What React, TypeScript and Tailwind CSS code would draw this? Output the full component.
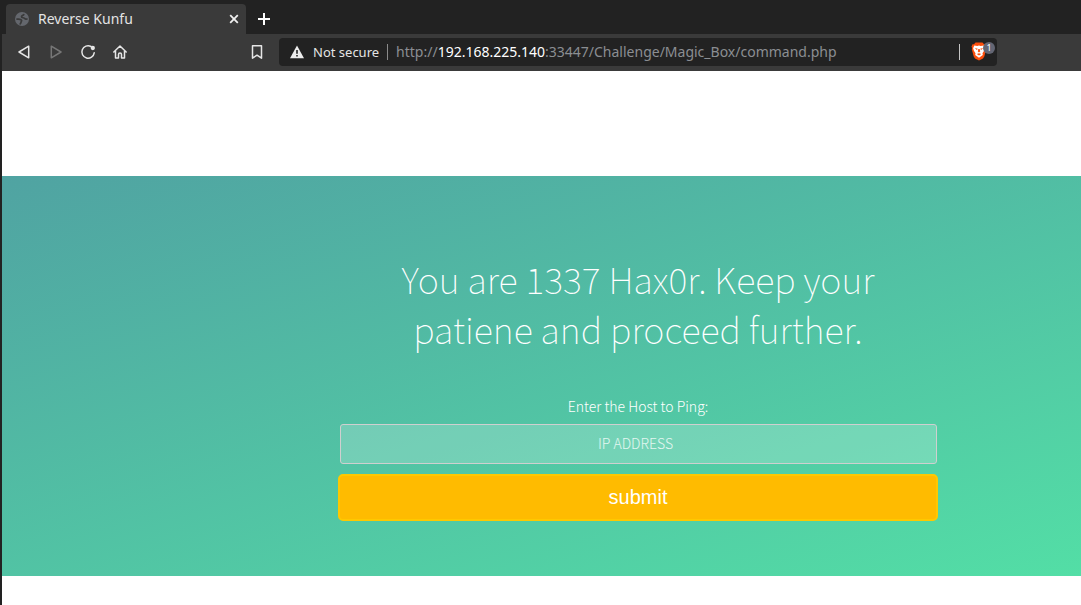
import React from "react";

const ui = "font-['Noto_Sans',sans-serif]";
const source = "font-['Noto_Sans_CJK_SC','Noto_Sans',sans-serif]";

function TabStrip() {
  return (
    <div className="flex h-[34px] items-end bg-[#222222] pl-1">
      <div className="flex h-[30px] w-60 items-center rounded-t bg-[#3a3a3a] pl-[9px] pr-[7px]">
        <svg viewBox="0 0 14 14" className="size-[14px] shrink-0" aria-hidden="true">
          <circle cx="7" cy="7" r="7" fill="#64676d" />
          <g fill="none" stroke="#3a3a3a" strokeWidth="1.700" strokeLinecap="round" strokeLinejoin="round">
            <path d="M8.800 2.600C8 3.400 6.500 3.300 6.500 4.800c0 1.300 2.600.6 3.300 1.700.4.700 1.200.7 2.200.500" />
            <path d="M2 7.200c1.400-.2 3.200 0 4.300.7 1 .7-.2 1.400-.2 2.200 0 .7-.300 1.300-.900 1.800" />
          </g>
        </svg>
        <span className="ml-[9px] grow whitespace-nowrap text-[14px] leading-5 text-[#e4e4e4]">Reverse Kunfu</span>
        <button type="button" aria-label="Close tab" className="flex size-[10px] items-center justify-center">
          <svg viewBox="0 0 10 10" className="size-[10px]" stroke="#f0f0f0" strokeWidth="1.800">
            <path d="M1.200 1.200l7.600 7.600M8.800 1.200L1.200 8.800" />
          </svg>
        </button>
      </div>
      <button type="button" aria-label="New tab" className="flex h-[30px] w-9 items-center justify-center">
        <svg viewBox="0 0 12 12" className="size-3" stroke="#ffffff" strokeWidth="2">
          <path d="M6 0v12M0 6h12" />
        </svg>
      </button>
    </div>
  );
}

function NavButton({ label, children }: { label: string; children: React.ReactNode }) {
  return (
    <button type="button" aria-label={label} className="flex size-8 items-center justify-center">
      <svg
        viewBox="0 0 16 16"
        className="size-4"
        fill="none"
        stroke="#e6e6e6"
        strokeWidth="1.500"
        strokeLinecap="round"
        strokeLinejoin="round"
      >
        {children}
      </svg>
    </button>
  );
}

function BraveShield() {
  return (
    <button type="button" aria-label="Brave Shields" className="relative h-5 w-[26px] shrink-0">
      <svg viewBox="0 0 16 19" className="h-[19px] w-4" aria-hidden="true">
        <path d="M4.500.5h7l1.500 1.700 1.500.1 1 2.200-.6 1.500.3 1.300-1.900 7.200-1.300 1.900L8 18.500l-4-2.100-1.300-1.900L.8 7.300l.3-1.300-.6-1.500 1-2.200L3 2.200z" fill="#fb4e0c" />
        <path d="M3.300 3.400l3 .6L8 3.400l1.700.6 3-.6 1.200 2.900-.8 2.500-1.600 2.500.3 1.600-1.700 1.400L8 15.800l-2.100-1.500-1.700-1.400.3-1.600-1.600-2.500-.8-2.500z" fill="#ffffff" />
        <path d="M3.800 6l3 .8-.9 1.200zM12.200 6l-3 .8.900 1.200zM7.300 7h1.400l.5 2.600L8 10.500l-1.200-.9zM5.800 12.100L8 11.300l2.200.8L8 13.500z" fill="#fb4e0c" />
      </svg>
      <span className="absolute left-3 top-0 flex size-3 items-center justify-center rounded-full bg-[#636674] text-[9px] leading-none text-white">
        1
      </span>
    </button>
  );
}

function Toolbar() {
  return (
    <div className="flex h-[37px] items-center bg-[#3a3a3a] pb-[2px] pl-[6px]">
      <NavButton label="Back">
        <path d="M12.700 2.200v11.600L3 8z" />
      </NavButton>
      <span className="opacity-35">
        <NavButton label="Forward">
          <path d="M3.300 2.200v11.600L13 8z" />
        </NavButton>
      </span>
      <NavButton label="Reload">
        <path d="M11 2.500A6.200 6.200 0 1 0 14.200 8.800" />
        <circle cx="12.800" cy="4" r="1.400" fill="#e6e6e6" />
      </NavButton>
      <NavButton label="Home">
        <path d="M1.800 8L8 2l6.200 6M3.500 7v7h3v-3.500a1.500 1.500 0 0 1 3 0V14h3V7" />
      </NavButton>
      <div className="ml-[105px]">
        <NavButton label="Bookmark">
          <path d="M3.500 1.800h9v12.400L8 11.200l-4.500 3z" />
        </NavButton>
      </div>
      <div className="ml-[6px] mr-[84px] flex h-7 min-w-0 grow items-center rounded bg-[#222222] pl-[11px]">
        <svg viewBox="0 0 14 14" className="size-[14px] shrink-0" aria-hidden="true">
          <path d="M7 .5L14 13.300H0z" fill="#ededed" />
          <path d="M6.200 5h1.600v3.800H6.200zM6.200 10h1.600v1.600H6.200z" fill="#222222" />
        </svg>
        <span className="ml-[9px] whitespace-nowrap text-[13px] leading-5 text-[#e4e4e4]">Not secure</span>
        <span className="ml-2 h-4 w-px shrink-0 bg-[#8a8a8a]" />
        <span className="ml-2 min-w-0 grow truncate text-[14px] leading-5 text-[#8b8e92]">
          http://<span className="text-white">192.168.225.140</span>:33447/Challenge/Magic_Box/command.php
        </span>
        <span className="mr-[11px] h-4 w-px shrink-0 bg-[#c4c4c4]" />
        <BraveShield />
      </div>
    </div>
  );
}

export default function App() {
  return (
    <div className="min-h-screen bg-white">
      <div className="min-h-screen border-l-2 border-[#222222]">
        <header className={ui}>
          <TabStrip />
          <Toolbar />
        </header>
        <main
          className={`mt-[105px] bg-[linear-gradient(to_bottom_right,#50a3a2,#53e3a6)] bg-[length:118%_100%] bg-no-repeat pb-[55px] pl-[193px] pt-[77px] text-white ${source}`}
        >
          <form className="mx-auto flex max-w-[600px] flex-col text-center" onSubmit={(e) => e.preventDefault()}>
            <h1 className="px-12 text-[36px] font-thin leading-[50px]">
              You are 1337 Hax0r. Keep your patiene and proceed further.
            </h1>
            <label htmlFor="host" className="mt-[43px] text-[14px] font-light leading-5">
              Enter the Host to Ping:
            </label>
            <input
              id="host"
              type="text"
              placeholder="IP ADDRESS"
              className="ml-[2px] mr-px mt-2 h-10 rounded-[3px] border border-[#cfcfcf] bg-white/20 pb-[2px] pl-[10px] pr-4 text-center text-[14px] font-light text-white outline-none placeholder:text-white/80"
            />
            <button
              type="submit"
              className="mt-[10px] h-[47px] rounded-[5px] border-2 border-[#ffc800] bg-[#ffbb00] pb-[2px] font-['Liberation_Sans',sans-serif] text-[20px] text-white"
            >
              submit
            </button>
          </form>
        </main>
      </div>
    </div>
  );
}
